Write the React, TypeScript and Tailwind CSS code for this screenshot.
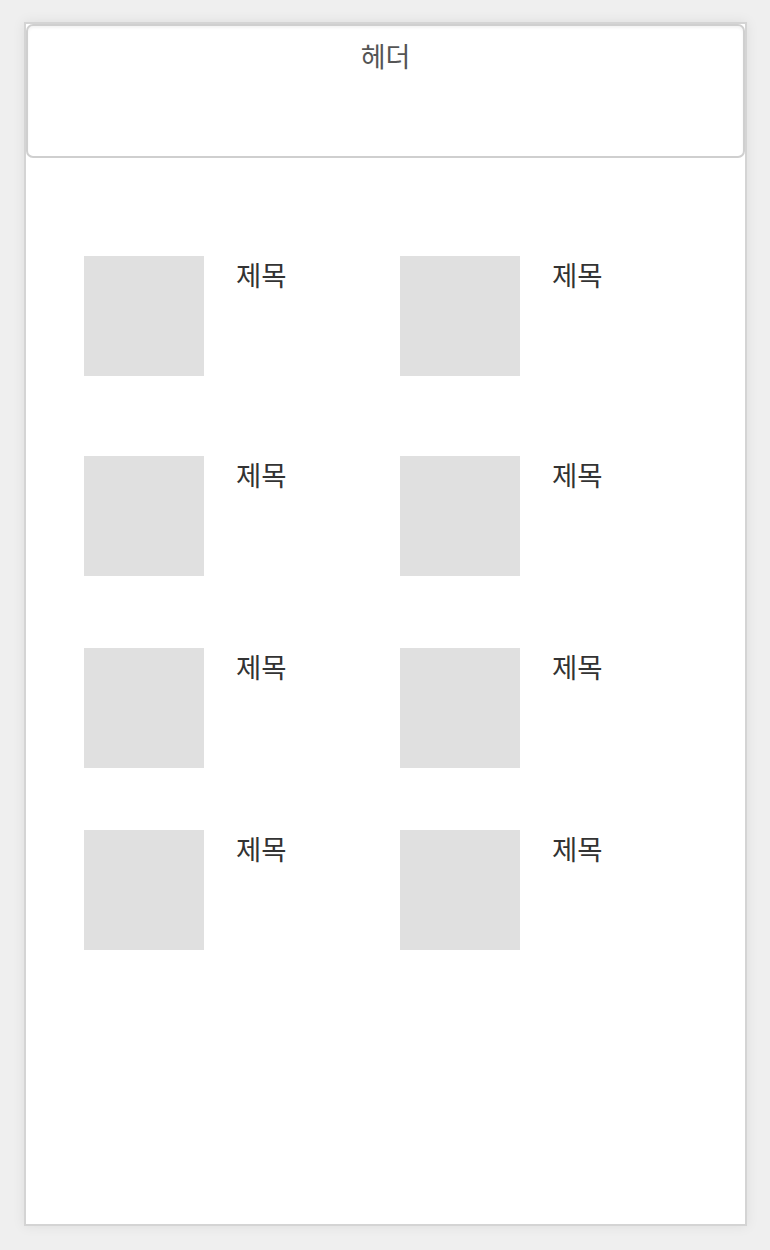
import React from "react";

const rows = [
  { mt: "mt-[98px]" },
  { mt: "mt-[80px]" },
  { mt: "mt-[72px]" },
  { mt: "mt-[62px]" },
];

function Item() {
  return (
    <div className="flex w-[316px] items-start">
      <div className="h-[120px] w-[120px] bg-[#e0e0e0]" />
      <div className="ml-[32px] mt-[-1px] text-[27.5px] leading-[38px] text-[#333]">제목</div>
    </div>
  );
}

export default function App() {
  return (
    <div
      className="min-h-[1250px] w-[770px] bg-[#efefef] pl-[24px] pt-[22px]"
      style={{ fontFamily: '"Noto Sans CJK KR", "Noto Sans", sans-serif' }}
    >
      <div className="h-[1204px] w-[723px] border-2 border-[#d4d4d4] bg-white shadow-[0_0_12px_rgba(0,0,0,0.08)]">
        <div className="flex h-[134px] w-[719px] justify-center rounded-[7px] border-2 border-[#cfcfcf] bg-white pt-[11px] shadow-[inset_0_2px_3px_rgba(0,0,0,0.05)]">
          <span className="text-[27px] leading-[38px] text-[#555]">헤더</span>
        </div>
        <div className="pl-[58px]">
          {rows.map((r, i) => (
            <div key={i} className={`flex ${r.mt}`}>
              <Item />
              <Item />
            </div>
          ))}
        </div>
      </div>
    </div>
  );
}
